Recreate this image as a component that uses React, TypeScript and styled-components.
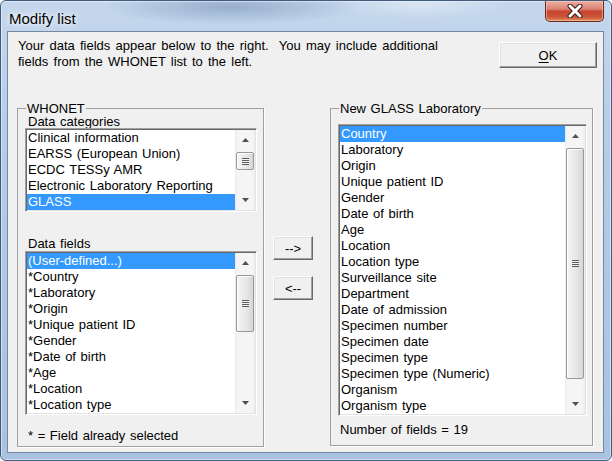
import React from 'react';
import styled, { createGlobalStyle } from 'styled-components';

const GlobalStyle = createGlobalStyle`
  html, body {
    margin: 0;
    padding: 0;
    background: #ffffff;
  }
  body {
    font-family: "Liberation Sans", Arial, sans-serif;
    font-size: 13px;
    word-spacing: 1px;
    color: #000;
  }
`;

const categories = [
  'Clinical information',
  'EARSS (European Union)',
  'ECDC TESSy AMR',
  'Electronic Laboratory Reporting',
  'GLASS',
];

const whonetFields = [
  '(User-defined...)',
  '*Country',
  '*Laboratory',
  '*Origin',
  '*Unique patient ID',
  '*Gender',
  '*Date of birth',
  '*Age',
  '*Location',
  '*Location type',
];

const glassFields = [
  'Country',
  'Laboratory',
  'Origin',
  'Unique patient ID',
  'Gender',
  'Date of birth',
  'Age',
  'Location',
  'Location type',
  'Surveillance site',
  'Department',
  'Date of admission',
  'Specimen number',
  'Specimen date',
  'Specimen type',
  'Specimen type (Numeric)',
  'Organism',
  'Organism type',
];

const Window = styled.div`
  width: 612px;
  height: 461px;
  box-sizing: border-box;
  border: 1px solid #3f5b7e;
  border-radius: 6px;
  overflow: hidden;
  display: flex;
  flex-direction: column;
  background:
    radial-gradient(ellipse 130px 18px at 230px 6px, rgba(70, 100, 140, 0.35), rgba(70, 100, 140, 0)),
    radial-gradient(ellipse 90px 14px at 420px 4px, rgba(255, 255, 255, 0.35), rgba(255, 255, 255, 0)),
    linear-gradient(to bottom, #c4d7ed 0%, #b6cce7 30%, #a9c2e1 100%);
  box-shadow: inset 0 0 0 1px rgba(255, 255, 255, 0.45);
`;

const TitleBar = styled.div`
  height: 30px;
  flex: none;
  display: flex;
  justify-content: space-between;
  align-items: flex-start;
`;

const Title = styled.div`
  margin: 9px 0 0 8px;
  font: 15px/17px "Liberation Sans", Arial, sans-serif;
  word-spacing: 0;
  color: #000;
  text-shadow: 0 0 8px #fff, 0 0 5px rgba(255, 255, 255, 0.9);
`;

const CloseButton = styled.div`
  width: 59px;
  height: 21px;
  margin-right: 7px;
  box-sizing: border-box;
  border: 1px solid #6a2a20;
  border-top: none;
  border-radius: 0 0 5px 5px;
  display: flex;
  align-items: center;
  justify-content: center;
  background: linear-gradient(to bottom, #eab0a2 0%, #dc8373 40%, #c7452f 52%, #cd5537 80%, #e2925f 100%);
  box-shadow: inset 0 0 0 1px rgba(255, 220, 210, 0.45);
`;

const Client = styled.div`
  flex: 1;
  margin: 0 7px 7px 6px;
  border: 1px solid #74889f;
  background: #f0f0f0;
  display: flex;
  flex-direction: column;
`;

const Header = styled.div`
  display: flex;
  justify-content: space-between;
  align-items: flex-start;
  padding: 6px 6px 0 10px;
`;

const Intro = styled.p`
  margin: 0;
  font-size: 13px;
  line-height: 16px;
  word-spacing: 1.6px;
  white-space: pre;
`;

const Button = styled.button<{ $width: number; $height: number }>`
  width: ${(p) => p.$width}px;
  height: ${(p) => p.$height}px;
  box-sizing: border-box;
  padding: 0;
  margin: 0;
  font: 13px "Liberation Sans", Arial, sans-serif;
  color: #000;
  background: #f0f0f0;
  border: 1px solid;
  border-color: #ffffff #696969 #696969 #ffffff;
  box-shadow: inset -1px -1px 0 #a0a0a0, inset 1px 1px 0 #e3e3e3;
  outline: none;
`;

const OkButton = styled(Button)`
  margin-top: 4px;
  u {
    text-decoration: underline;
    text-underline-offset: 2px;
  }
`;

const Body = styled.div`
  display: flex;
  align-items: flex-start;
  padding-left: 9px;
  margin-top: 31px;
`;

const GroupBox = styled.fieldset<{ $width: number; $padRight: number }>`
  width: ${(p) => p.$width}px;
  box-sizing: border-box;
  min-width: 0;
  margin: 0;
  padding: 0 ${(p) => p.$padRight}px 0 7px;
  border: 1px solid #a0a0a0;
  box-shadow: 1px 1px 0 #ffffff;
  display: flex;
  flex-direction: column;
`;

const Legend = styled.legend`
  padding: 0 1px;
  margin-left: 1px;
  font-size: 13px;
  line-height: 15px;
`;

const Label = styled.div<{ $top: number; $height: number; $indent: number; $bottom?: number }>`
  margin-top: ${(p) => p.$top}px;
  margin-bottom: ${(p) => p.$bottom ?? 0}px;
  padding-left: ${(p) => p.$indent}px;
  font-size: 13px;
  line-height: ${(p) => p.$height}px;
  white-space: nowrap;
`;

const ListFrame = styled.div<{ $top: number }>`
  margin-top: ${(p) => p.$top}px;
  display: flex;
  background: #ffffff;
  border: 1px solid;
  border-color: #a0a0a0 #ffffff #ffffff #a0a0a0;
  padding: 1px;
  box-shadow: inset 1px 1px 0 #696969, inset -1px -1px 0 #e3e3e3;
`;

const Rows = styled.div`
  flex: 1;
  min-width: 0;
  display: flex;
  flex-direction: column;
`;

const Row = styled.div<{ $selected?: boolean }>`
  height: 16px;
  line-height: 16px;
  padding-left: 1px;
  white-space: nowrap;
  overflow: hidden;
  font-size: 13px;
  color: ${(p) => (p.$selected ? '#ffffff' : '#000000')};
  background: ${(p) => (p.$selected ? '#3399ff' : 'transparent')};
`;

const ScrollBar = styled.div`
  width: 20px;
  flex: none;
  display: flex;
  flex-direction: column;
  background: linear-gradient(to right, #e9e9e9 0, #f5f5f5 2px, #f5f5f5 17px, #ececec 20px);
`;

const ArrowButton = styled.div`
  height: 20px;
  flex: none;
  display: flex;
  align-items: center;
  justify-content: center;
`;

const Track = styled.div`
  flex: 1;
  display: flex;
  flex-direction: column;
`;

const TrackGap = styled.div<{ $size: number }>`
  height: ${(p) => p.$size}px;
  flex: none;
`;

const Thumb = styled.div<{ $size: number }>`
  height: ${(p) => p.$size}px;
  flex: none;
  margin: 0 1px;
  box-sizing: border-box;
  border: 1px solid #989898;
  border-radius: 2px;
  background: linear-gradient(to right, #f4f4f4 0%, #e9e9e9 50%, #d6d6d6 100%);
  box-shadow: inset 1px 1px 0 #ffffff;
  display: flex;
  align-items: center;
  justify-content: center;
`;

const Grip = styled.div`
  width: 7px;
  height: 7px;
  background: repeating-linear-gradient(to bottom, #5c5c5c 0 1px, #f2f2f2 1px 2px);
`;

const MiddleColumn = styled.div`
  display: flex;
  flex-direction: column;
  gap: 16px;
  margin: 135px 17px 0 9px;
`;

const Arrow = ({ down }: { down?: boolean }) => (
  <svg width="7" height="4" viewBox="0 0 7 4">
    <polygon points={down ? '0,0 7,0 3.5,4' : '0,4 7,4 3.5,0'} fill="#505050" />
  </svg>
);

interface ScrollProps {
  before: number;
  thumb: number;
  after: number;
}

const Scroll = ({ before, thumb, after }: ScrollProps) => (
  <ScrollBar>
    <ArrowButton>
      <Arrow />
    </ArrowButton>
    <Track>
      <TrackGap $size={before} />
      <Thumb $size={thumb}>
        <Grip />
      </Thumb>
      <TrackGap $size={after} />
    </Track>
    <ArrowButton>
      <Arrow down />
    </ArrowButton>
  </ScrollBar>
);

interface ListProps {
  items: string[];
  selected: number;
  top: number;
  scroll: ScrollProps;
}

const ListBox = ({ items, selected, top, scroll }: ListProps) => (
  <ListFrame $top={top}>
    <Rows>
      {items.map((item, i) => (
        <Row key={item} $selected={i === selected}>
          {item}
        </Row>
      ))}
    </Rows>
    <Scroll {...scroll} />
  </ListFrame>
);

export default function App() {
  return (
    <>
      <GlobalStyle />
      <Window>
        <TitleBar>
          <Title>Modify list</Title>
          <CloseButton>
            <svg width="18" height="14" viewBox="0 0 18 14">
              <path d="M4 2 L14 12 M14 2 L4 12" stroke="#3b1812" strokeWidth="5" strokeLinecap="round" />
              <path d="M4 2 L14 12 M14 2 L4 12" stroke="#ffffff" strokeWidth="3" strokeLinecap="round" />
            </svg>
          </CloseButton>
        </TitleBar>
        <Client>
          <Header>
            <Intro>
              {'Your data fields appear below to the right.  You may include additional\nfields from the WHONET list to the left.'}
            </Intro>
            <OkButton $width={98} $height={26}>
              <u>O</u>K
            </OkButton>
          </Header>
          <Body>
            <GroupBox $width={247} $padRight={6}>
              <Legend>WHONET</Legend>
              <Label $top={0} $height={12} $indent={3}>
                Data categories
              </Label>
              <ListBox items={categories} selected={4} top={0} scroll={{ before: 2, thumb: 18, after: 20 }} />
              <Label $top={25} $height={14} $indent={3}>
                Data fields
              </Label>
              <ListBox items={whonetFields} selected={0} top={0} scroll={{ before: 2, thumb: 57, after: 61 }} />
              <Label $top={14} $height={14} $indent={3} $bottom={3}>
                * = Field already selected
              </Label>
            </GroupBox>
            <MiddleColumn>
              <Button $width={40} $height={24}>--&gt;</Button>
              <Button $width={40} $height={24}>&lt;--</Button>
            </MiddleColumn>
            <GroupBox $width={263} $padRight={5}>
              <Legend>New GLASS Laboratory</Legend>
              <ListBox items={glassFields} selected={0} top={8} scroll={{ before: 2, thumb: 231, after: 15 }} />
              <Label $top={7} $height={14} $indent={2} $bottom={8}>
                Number of fields = 19
              </Label>
            </GroupBox>
          </Body>
        </Client>
      </Window>
    </>
  );
}
